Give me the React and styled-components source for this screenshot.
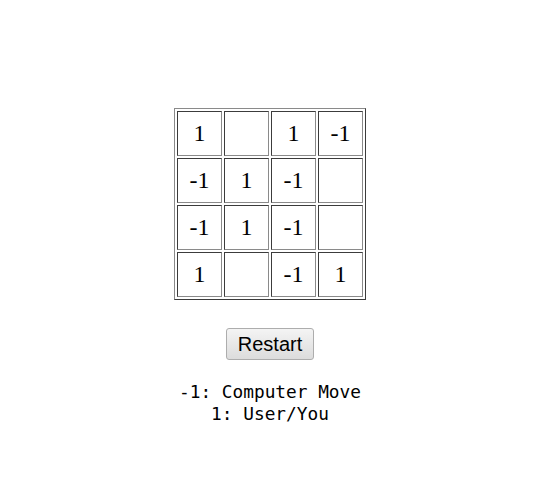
import React, { useState } from 'react';
import styled, { createGlobalStyle } from 'styled-components';

const initialBoard = [
  [1, 0, 1, -1],
  [-1, 1, -1, 0],
  [-1, 1, -1, 0],
  [1, 0, -1, 1],
];

const GlobalStyle = createGlobalStyle`
  html, body {
    margin: 0;
    padding: 0;
    background: #fff;
  }
`;

const Page = styled.div`
  display: flex;
  flex-direction: column;
  align-items: center;
  padding-top: 108px;
  padding-left: 1px;
`;

const Board = styled.table`
  border-collapse: separate;
  border-spacing: 2px;
  border: 1px solid;
  border-color: #8a8a8a #3c3c3c #3c3c3c #8a8a8a;
`;

const Cell = styled.td`
  width: 43px;
  height: 43px;
  padding: 0;
  border: 1px solid;
  border-color: #3c3c3c #8a8a8a #8a8a8a #3c3c3c;
  text-align: center;
  vertical-align: middle;
  font-family: "Liberation Serif", serif;
  font-size: 24px;
  color: #000;
`;

const RestartButton = styled.button`
  margin-top: 28px;
  height: 32px;
  padding: 0 11px;
  font-family: "Liberation Sans", Arial, sans-serif;
  font-size: 20px;
  color: #000;
  background: linear-gradient(#f4f4f4, #dcdcdc);
  border: 1px solid #adadad;
  border-radius: 3px;
  cursor: pointer;
`;

const Legend = styled.div`
  margin-top: 21px;
  font-family: "DejaVu Sans Mono", monospace;
  font-size: 17.8px;
  line-height: 22px;
  text-align: center;
  color: #000;
  white-space: pre;
`;

const App = () => {
  const [board, setBoard] = useState(initialBoard);

  return (
    <Page>
      <GlobalStyle />
      <Board>
        <tbody>
          {board.map((row, r) => (
            <tr key={r}>
              {row.map((v, c) => (
                <Cell key={c}>{v === 0 ? '' : v}</Cell>
              ))}
            </tr>
          ))}
        </tbody>
      </Board>
      <RestartButton onClick={() => setBoard(initialBoard)}>Restart</RestartButton>
      <Legend>
        <div>-1: Computer Move</div>
        <div>1: User/You</div>
      </Legend>
    </Page>
  );
};

export default App;
